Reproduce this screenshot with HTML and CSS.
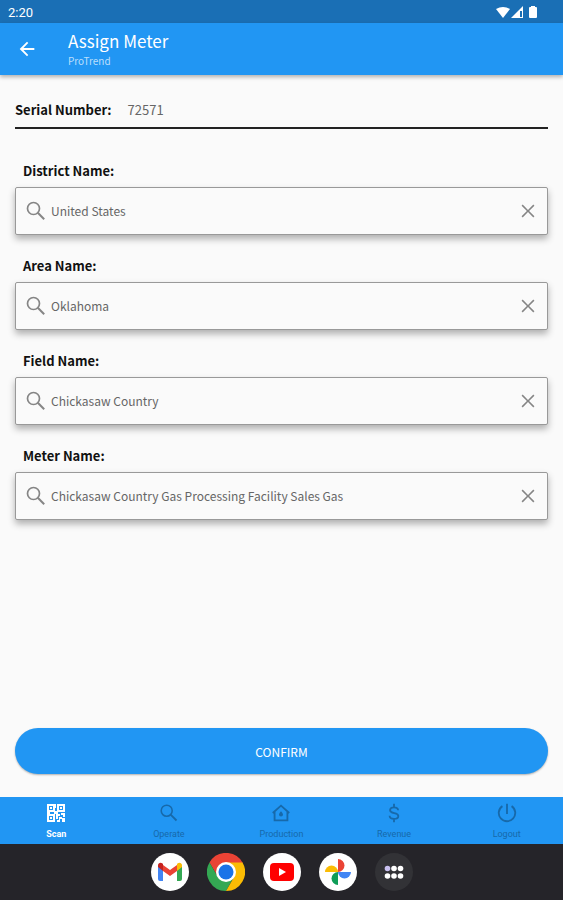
FILE: index.html
```html
<!DOCTYPE html>
<html lang="en">
<head>
    <meta charset="UTF-8">
    <meta name="viewport" content="width=device-width, initial-scale=1.0">
    <title>Assign Meter</title>
    <link rel="stylesheet" href="styles.css">
</head>
<body>
    <div class="status-bar">
        <span>2:20</span>
        <svg class="status-icons" width="44" height="14" viewBox="0 0 44 14">
            <path d="M1 3Q8-1 15 3L8 12z"/>
            <path d="M28 0v12H16z"/>
            <path class="cutout" d="M25 5h2v6h-2z"/>
            <path d="M36 0h4v1h1q1 0 1 1v9q0 1-1 1h-6q-1 0-1-1V2q0-1 1-1h1z"/>
        </svg>
    </div>

    <header class="app-bar">
        <button type="button" class="icon-button back" aria-label="Back">
            <svg width="22" height="22" viewBox="0 0 24 24"><path d="M20 10.800H8.100l5.300-5.300L12 4l-8 8 8 8 1.400-1.500-5.300-5.300H20z"/></svg>
        </button>
        <div>
            <h1>Assign Meter</h1>
            <p>ProTrend</p>
        </div>
    </header>

    <main>
        <form class="meter-form">
            <div class="serial">
                <span class="serial-label">Serial Number:</span>
                <span class="serial-value">72571</span>
            </div>

            <div class="field">
                <label for="district">District Name:</label>
                <div class="search-box">
                    <svg class="search-icon" width="24" height="24" viewBox="0 0 24 24"><use href="#search"/></svg>
                    <input type="text" id="district" value="United States">
                    <button type="button" class="icon-button clear" aria-label="Clear district"><svg width="22" height="22" viewBox="0 0 24 24"><use href="#cross"/></svg></button>
                </div>
            </div>

            <div class="field">
                <label for="area">Area Name:</label>
                <div class="search-box">
                    <svg class="search-icon" width="24" height="24" viewBox="0 0 24 24"><use href="#search"/></svg>
                    <input type="text" id="area" value="Oklahoma">
                    <button type="button" class="icon-button clear" aria-label="Clear area"><svg width="22" height="22" viewBox="0 0 24 24"><use href="#cross"/></svg></button>
                </div>
            </div>

            <div class="field">
                <label for="field">Field Name:</label>
                <div class="search-box">
                    <svg class="search-icon" width="24" height="24" viewBox="0 0 24 24"><use href="#search"/></svg>
                    <input type="text" id="field" value="Chickasaw Country">
                    <button type="button" class="icon-button clear" aria-label="Clear field"><svg width="22" height="22" viewBox="0 0 24 24"><use href="#cross"/></svg></button>
                </div>
            </div>

            <div class="field">
                <label for="meter">Meter Name:</label>
                <div class="search-box">
                    <svg class="search-icon" width="24" height="24" viewBox="0 0 24 24"><use href="#search"/></svg>
                    <input type="text" id="meter" value="Chickasaw Country Gas Processing Facility Sales Gas">
                    <button type="button" class="icon-button clear" aria-label="Clear meter"><svg width="22" height="22" viewBox="0 0 24 24"><use href="#cross"/></svg></button>
                </div>
            </div>

            <button type="submit" class="confirm">CONFIRM</button>
        </form>
    </main>

    <nav class="tabs">
        <a href="#scan" class="active">
            <svg width="22" height="22" viewBox="0 0 22 22">
                <path fill-rule="evenodd" d="M2 2h8v8H2zM4 4v4h4V4zM12 2h8v8h-8zM14 4v4h4V4zM2 12h8v8H2zM4 14v4h4v-4z"/>
                <path d="M5 5h2v2H5zM15 5h2v2h-2zM5 15h2v2H5zM9 2h2v4H9zM9 9h4v3H9zM2 9h3v4H2zM11 12h4v2h-2v3h-2zM16 11h4v4h-2v-2h-2zM14 15h3v2h-2v3h-3v-2h2zM17 16h3v4h-3z"/>
            </svg>
            <span>Scan</span>
        </a>
        <a href="#operate">
            <svg width="22" height="22" viewBox="0 0 24 24"><use href="#search"/></svg>
            <span>Operate</span>
        </a>
        <a href="#production">
            <svg width="22" height="22" viewBox="0 0 24 24">
                <path class="line" d="M3 12l9-8 9 8M5 10.500V20h14v-9.500"/>
                <path d="M12 10c1.500 1.800 2.200 2.600 2.200 3.700a2.200 2.200 0 0 1-4.400 0c0-1.100.7-1.900 2.200-3.700z"/>
            </svg>
            <span>Production</span>
        </a>
        <a href="#revenue">
            <svg width="22" height="22" viewBox="0 0 24 24">
                <path class="line" d="M12 2v4M12 18v4M16.500 9c-.2-2-1.800-3.200-4.500-3.200S7.700 7 7.700 9c0 4.300 9 2 9 6.200 0 2-1.900 3.200-4.700 3.200S7.300 17 7.200 15"/>
            </svg>
            <span>Revenue</span>
        </a>
        <a href="#logout">
            <svg width="22" height="22" viewBox="0 0 24 24"><path class="line" d="M12 2v11M7 4.500a9 9 0 1 0 10 0"/></svg>
            <span>Logout</span>
        </a>
    </nav>

    <div class="dock">
        <button type="button" aria-label="Gmail">
            <svg width="38" height="38" viewBox="0 0 38 38">
                <circle cx="19" cy="19" r="19" fill="#fff"/>
                <path fill="#4285f4" d="M7 13l5 4v11H9q-2 0-2-2z"/>
                <path fill="#34a853" d="M31 13l-5 4v11h3q2 0 2-2z"/>
                <path fill="#ea4335" d="M12 12l7 5 7-5v6l-7 5-7-5z"/>
                <path fill="#c5221f" d="M7 14v-1.500c0-2.500 2.500-3.500 4.200-2.200L12 11v7l-5-4z"/>
                <path fill="#fbbc04" d="M31 14v-1.500c0-2.500-2.500-3.500-4.200-2.200L26 11v7l5-4z"/>
            </svg>
        </button>
        <button type="button" aria-label="Chrome">
            <svg width="38" height="38" viewBox="0 0 38 38">
                <path fill="#ea4335" d="M2.500 9.500L10.800 23.800 19 10h16.800a19 19 0 0 0-33.300-.5z"/>
                <path fill="#34a853" d="M2.500 9.500a19 19 0 0 0 16.500 28.500l8-14.200L19 19l-8.200 4.800z"/>
                <path fill="#fbbc04" d="M19 38a19 19 0 0 0 16.500-28.500H19l8.200 14.300z"/>
                <circle cx="19" cy="19" r="10" fill="#fff"/>
                <circle cx="19" cy="19" r="7.500" fill="#1a73e8"/>
            </svg>
        </button>
        <button type="button" aria-label="YouTube">
            <svg width="38" height="38" viewBox="0 0 38 38">
                <circle cx="19" cy="19" r="19" fill="#fff"/>
                <rect x="7" y="10" width="24" height="18" rx="4" fill="#f00"/>
                <path fill="#fff" d="M16 15l7 4-7 4z"/>
            </svg>
        </button>
        <button type="button" aria-label="Photos">
            <svg width="38" height="38" viewBox="0 0 38 38">
                <circle cx="19" cy="19" r="19" fill="#fff"/>
                <path fill="#ea4335" d="M19 6a6.500 6.500 0 0 1 0 13z"/>
                <path fill="#4285f4" d="M32 19a6.500 6.500 0 0 1-13 0z"/>
                <path fill="#0f9d58" d="M19 32a6.500 6.500 0 0 1 0-13z"/>
                <path fill="#fbbc04" d="M6 19a6.500 6.500 0 0 1 13 0z"/>
            </svg>
        </button>
        <button type="button" aria-label="All apps">
            <svg width="38" height="38" viewBox="0 0 38 38">
                <circle cx="19" cy="19" r="19" fill="#323236"/>
                <g fill="#fff">
                    <circle cx="12.500" cy="15.500" r="2.800" fill="#c9c0f0"/>
                    <circle cx="19" cy="15.500" r="2.800"/>
                    <circle cx="25.500" cy="15.500" r="2.800"/>
                    <circle cx="12.500" cy="23" r="2.800"/>
                    <circle cx="19" cy="23" r="2.800"/>
                    <circle cx="25.500" cy="23" r="2.800"/>
                </g>
            </svg>
        </button>
    </div>

    <!-- Shared icons -->
    <svg class="sprite" width="0" height="0">
        <symbol id="search" viewBox="0 0 24 24">
            <circle cx="9.500" cy="9.500" r="6" fill="none" stroke="currentColor" stroke-width="1.700"/>
            <path fill="none" stroke="currentColor" stroke-width="2" d="M13.800 13.800l6.400 6.400"/>
        </symbol>
        <symbol id="cross" viewBox="0 0 24 24">
            <path d="M19 6.200L17.800 5 12 10.800 6.200 5 5 6.200l5.800 5.800L5 17.800 6.200 19l5.800-5.800 5.800 5.800 1.200-1.200-5.800-5.800z"/>
        </symbol>
    </svg>
</body>
</html>
```

FILE: styles.css
```css
* {
    box-sizing: border-box;
}

body {
    margin: 0;
    min-height: 100vh;
    display: flex;
    flex-direction: column;
    background-color: #fafafa;
    color: #111;
    font-family: "Noto Sans CJK SC", "Noto Sans", sans-serif;
    font-size: 13px;
}

svg {
    display: block;
    fill: currentColor;
}

button {
    padding: 0;
    border: none;
    background: none;
    color: inherit;
    font-family: inherit;
    cursor: pointer;
}

.sprite {
    position: absolute;
}

.status-bar {
    display: flex;
    justify-content: space-between;
    align-items: center;
    height: 23px;
    padding: 2px 24px 0 8px;
    background-color: #1a6fb5;
    color: #fff;
    font-family: Roboto, sans-serif;
    font-size: 13px;
}

.cutout {
    fill: #1a6fb5;
}

.app-bar {
    display: flex;
    align-items: center;
    gap: 30px;
    height: 52px;
    padding: 0 16px;
    background-color: #2196f3;
    color: #fff;
    box-shadow: 0 2px 4px rgba(0, 0, 0, 0.3);
}

.app-bar h1 {
    margin: 0;
    font-size: 17px;
    font-weight: 400;
    line-height: 24px;
}

.app-bar p {
    margin: 0;
    color: #bbdefb;
    font-size: 10px;
    line-height: 16px;
}

main {
    flex: 1;
    display: flex;
    padding: 20px 15px 23px;
}

.meter-form {
    flex: 1;
    display: flex;
    flex-direction: column;
}

.serial {
    display: flex;
    gap: 16px;
    padding: 5px 0 7px;
    margin-bottom: 32px;
    border-bottom: 2px solid #222;
    line-height: 20px;
}

.serial-label {
    font-weight: bold;
}

.serial-value {
    color: #666;
}

.field {
    margin-bottom: 21px;
}

.field label {
    display: block;
    margin: 0 8px 6px;
    font-weight: bold;
    line-height: 20px;
}

.search-box {
    display: flex;
    align-items: center;
    height: 48px;
    padding: 0 8px;
    border: 1px solid #999;
    border-radius: 2px;
    background-color: #fafafa;
    box-shadow: 0 4px 7px rgba(0, 0, 0, 0.3);
}

.search-icon {
    color: #858585;
}

.search-box input {
    flex: 1;
    min-width: 0;
    padding: 0 3px 2px;
    border: none;
    outline: none;
    background: none;
    color: #666;
    font-family: inherit;
    font-size: 12px;
}

.clear {
    color: #858585;
}

.confirm {
    height: 46px;
    margin-top: auto;
    border-radius: 23px;
    background-color: #2196f3;
    color: #fff;
    font-size: 12px;
    box-shadow: 0 1px 2px rgba(0, 0, 0, 0.3);
}

.tabs {
    display: flex;
    height: 47px;
    background-color: #2196f3;
}

.tabs a {
    flex: 1;
    display: flex;
    flex-direction: column;
    align-items: center;
    gap: 3px;
    padding-top: 5px;
    color: #1769aa;
    font-family: Roboto, sans-serif;
    font-size: 9px;
    line-height: 14px;
    text-decoration: none;
}

.tabs .active {
    color: #fff;
    font-weight: bold;
}

.line {
    fill: none;
    stroke: currentColor;
    stroke-width: 2;
}

.dock {
    display: flex;
    justify-content: center;
    align-items: center;
    gap: 18px;
    height: 56px;
    background-color: #252429;
}
```
